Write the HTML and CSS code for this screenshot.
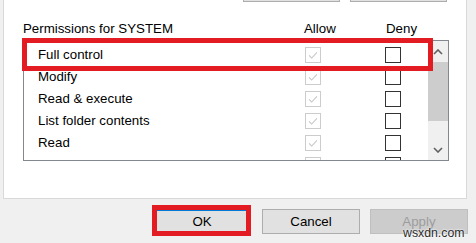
FILE: index.html
```html
<!DOCTYPE html>
<html lang="en">
<head>
    <meta charset="UTF-8">
    <title>Permissions for SYSTEM</title>
    <link rel="stylesheet" href="styles.css">
</head>
<body>

    <!-- Security tab page -->
    <div class="tab-page">
        <!-- only the bottom edge of these buttons is visible -->
        <div class="top-buttons">
            <button class="btn" aria-label="Add"></button>
            <button class="btn" aria-label="Remove"></button>
        </div>

        <div class="perm-head">
            <span>Permissions for SYSTEM</span>
            <span>Allow</span>
            <span>Deny</span>
        </div>

        <div class="perm-list">
            <div class="rows">
                <div class="row"><span>Full control</span><span class="cb cb-off"><svg viewBox="0 0 16 16"><polyline points="3.5,8.5 6.5,11.5 12.5,5"/></svg></span><span class="cb"></span></div>
                <div class="row"><span>Modify</span><span class="cb cb-off"><svg viewBox="0 0 16 16"><polyline points="3.5,8.5 6.5,11.5 12.5,5"/></svg></span><span class="cb"></span></div>
                <div class="row"><span>Read &amp; execute</span><span class="cb cb-off"><svg viewBox="0 0 16 16"><polyline points="3.5,8.5 6.5,11.5 12.5,5"/></svg></span><span class="cb"></span></div>
                <div class="row"><span>List folder contents</span><span class="cb cb-off"><svg viewBox="0 0 16 16"><polyline points="3.5,8.5 6.5,11.5 12.5,5"/></svg></span><span class="cb"></span></div>
                <div class="row"><span>Read</span><span class="cb cb-off"><svg viewBox="0 0 16 16"><polyline points="3.5,8.5 6.5,11.5 12.5,5"/></svg></span><span class="cb"></span></div>
                <div class="row"><span>Write</span><span class="cb cb-off"><svg viewBox="0 0 16 16"><polyline points="3.5,8.5 6.5,11.5 12.5,5"/></svg></span><span class="cb"></span></div>
            </div>

            <div class="scrollbar">
                <div class="sb-btn"><svg viewBox="0 0 10 6"><polyline points="1,5 5,1 9,5"/></svg></div>
                <div class="sb-thumb"></div>
                <div class="sb-track"></div>
                <div class="sb-btn"><svg viewBox="0 0 10 6"><polyline points="1,1 5,5 9,1"/></svg></div>
            </div>

            <!-- red annotation -->
            <div class="mark mark-row"></div>
        </div>
    </div>

    <!-- Dialog buttons -->
    <div class="footer">
        <div class="ok-wrap">
            <button class="btn btn-default">OK</button>
            <div class="mark mark-ok"></div>
        </div>
        <button class="btn">Cancel</button>
        <button class="btn" disabled>Apply</button>
    </div>

    <div class="watermark">wsxdn.com</div>

</body>
</html>
```

FILE: styles.css
```css
/* General styles */
body {
    font-family: "Liberation Sans", Arial, sans-serif;
    font-size: 13.3px;
    color: #000;
    margin: 0;
    padding: 0;
    width: 476px;
    height: 243px;
    overflow: hidden;
    background-color: #f0f0f0;
    position: relative;
}

/* Tab page */
.tab-page {
    box-sizing: border-box;
    margin-left: 3px;
    width: 464px;
    height: 199px;
    background-color: #fff;
    border: 1px solid #d9d9d9;
    border-top: none;
    overflow: hidden;
}

.top-buttons {
    display: flex;
    gap: 10px;
    margin-top: -21px;
    padding-left: 239px;
}

.top-buttons .btn {
    width: 97px;
    height: 23px;
}

/* Buttons */
.btn {
    box-sizing: border-box;
    width: 98px;
    height: 25px;
    padding: 0;
    font-family: inherit;
    font-size: 13.3px;
    color: #000;
    background-color: #e1e1e1;
    border: 1px solid #adadad;
}

.btn-default {
    border: 2px solid #0078d7;
}

.btn:disabled {
    background-color: #cccccc;
    border-color: #bfbfbf;
    color: #9d9d9d;
}

/* Permissions header */
.perm-head {
    display: grid;
    grid-template-columns: 281px 82px auto;
    margin-top: 19px;
    padding-left: 19px;
    line-height: 15px;
}

/* Permissions list */
.perm-list {
    position: relative;
    box-sizing: border-box;
    display: flex;
    margin: 4px 0 0 19px;
    width: 426px;
    height: 121px;
    border: 1px solid #828790;
}

.rows {
    flex-grow: 1;
    padding-top: 3px;
    overflow: hidden;
}

.row {
    display: grid;
    grid-template-columns: 267px 80px auto;
    align-items: center;
    height: 22px;
    padding-left: 14px;
    line-height: 22px;
    white-space: nowrap;
}

.cb {
    box-sizing: border-box;
    display: block;
    width: 16px;
    height: 16px;
    border: 1px solid #333;
    background-color: #fff;
}

.cb-off {
    border-color: #cccccc;
}

.cb svg {
    display: block;
    width: 14px;
    height: 14px;
    fill: none;
    stroke: #c6c6c6;
    stroke-width: 1.2;
}

/* Scrollbar */
.scrollbar {
    display: flex;
    flex-direction: column;
    width: 20px;
    background-color: #f0f0f0;
}

.sb-btn {
    display: flex;
    align-items: center;
    justify-content: center;
    height: 20px;
}

.sb-btn:first-child {
    height: 21px;
}

.sb-btn svg {
    width: 10px;
    height: 6px;
    fill: none;
    stroke: #606060;
    stroke-width: 1.6;
}

.sb-thumb {
    height: 59px;
    background-color: #cdcdcd;
}

.sb-track {
    flex-grow: 1;
}

/* Red annotation boxes */
.mark {
    position: absolute;
    box-sizing: border-box;
    border: 5px solid #e31b23;
    pointer-events: none;
}

.mark-row {
    left: -2px;
    top: -3px;
    width: 411px;
    height: 33px;
}

/* Dialog buttons */
.footer {
    display: flex;
    justify-content: flex-end;
    gap: 10px;
    margin-top: 10px;
    padding-right: 8px;
}

.ok-wrap {
    position: relative;
    margin-right: 1px;
}

.ok-wrap .btn {
    display: block;
}

.mark-ok {
    left: -1px;
    top: -4px;
    width: 99px;
    height: 31px;
}

.watermark {
    position: absolute;
    left: 403px;
    top: 226px;
    font-size: 12.3px;
    color: #2b2b2b;
    text-shadow: 0 0 2px #fff, 0 0 2px #fff;
}
```
